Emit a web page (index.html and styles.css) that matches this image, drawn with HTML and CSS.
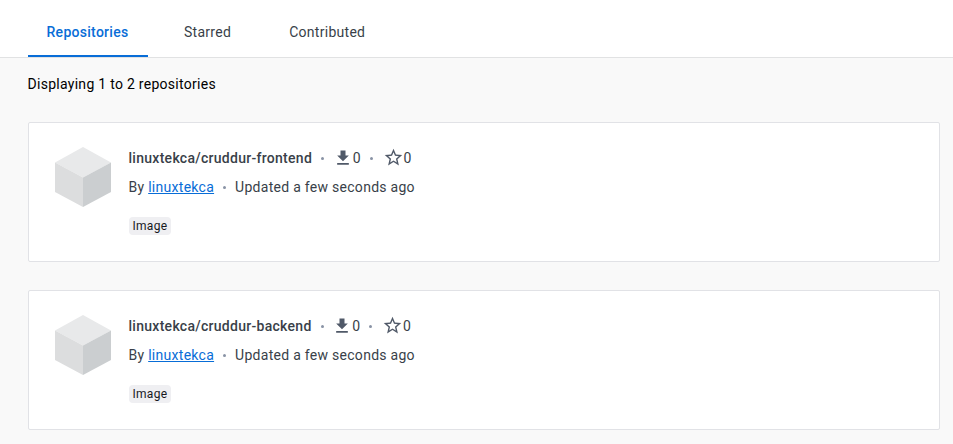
FILE: index.html
```html
<!DOCTYPE html>
<html lang="en">
<head>
<meta charset="utf-8">
<title>Repositories</title>
<link rel="stylesheet" href="styles.css">
</head>
<body>
<nav class="tabs">
  <a class="tab active">Repositories</a>
  <a class="tab">Starred</a>
  <a class="tab">Contributed</a>
</nav>
<main class="content">
  <p class="summary">Displaying 1 to 2 repositories</p>
  <article class="card">
    <svg class="cube" viewBox="0 0 56 60"><path fill="#e8e9ea" d="M28 0 56 15.500 28 30.500 0 15.500z"/><path fill="#dcddde" d="M0 15.500 28 30.500V60L0 45z"/><path fill="#cbced0" d="M56 15.500 28 30.500V60L56 45z"/></svg>
    <div class="info">
      <div class="title"><strong>linuxtekca/cruddur-frontend</strong><i class="dot"></i>
        <svg class="icon download" viewBox="0 0 24 24"><path d="M19 9h-4V3H9v6H5l7 7 7-7zM5 18v2h14v-2H5z"/></svg><span>0</span><i class="dot"></i>
        <svg class="icon star" viewBox="0 0 24 24"><path d="m22 9.240-7.190-.62L12 2 9.190 8.630 2 9.240l5.460 4.730L5.820 21 12 17.270 18.180 21l-1.630-7.030L22 9.240zM12 15.400l-3.760 2.270 1-4.280-3.320-2.880 4.380-.38L12 6.100l1.710 4.040 4.380.38-3.320 2.880 1 4.280L12 15.400z"/></svg><span>0</span></div>
      <div class="meta">By&nbsp;<a class="owner">linuxtekca</a><i class="dot"></i><span>Updated a few seconds ago</span></div>
      <span class="badge">Image</span>
    </div>
  </article>
  <article class="card">
    <svg class="cube" viewBox="0 0 56 60"><path fill="#e8e9ea" d="M28 0 56 15.500 28 30.500 0 15.500z"/><path fill="#dcddde" d="M0 15.500 28 30.500V60L0 45z"/><path fill="#cbced0" d="M56 15.500 28 30.500V60L56 45z"/></svg>
    <div class="info">
      <div class="title"><strong>linuxtekca/cruddur-backend</strong><i class="dot"></i>
        <svg class="icon download" viewBox="0 0 24 24"><path d="M19 9h-4V3H9v6H5l7 7 7-7zM5 18v2h14v-2H5z"/></svg><span>0</span><i class="dot"></i>
        <svg class="icon star" viewBox="0 0 24 24"><path d="m22 9.240-7.190-.62L12 2 9.190 8.630 2 9.240l5.460 4.730L5.820 21 12 17.270 18.180 21l-1.630-7.030L22 9.240zM12 15.400l-3.760 2.270 1-4.280-3.320-2.880 4.380-.38L12 6.100l1.710 4.040 4.380.38-3.320 2.880 1 4.280L12 15.400z"/></svg><span>0</span></div>
      <div class="meta">By&nbsp;<a class="owner">linuxtekca</a><i class="dot"></i><span>Updated a few seconds ago</span></div>
      <span class="badge">Image</span>
    </div>
  </article>
</main>
</body>
</html>
```
FILE: styles.css
```css
* { box-sizing: border-box; }
body { margin: 0; height: 444px; overflow: hidden; background: #f9f9f9; color: #000; font: 14px/20px Roboto, sans-serif; letter-spacing: .28px; }
.tabs { display: flex; gap: 14px; height: 58px; padding-left: 28px; background: #fff; border-bottom: 1px solid #e1e2e3; }
.tab { height: 57px; padding: 22px 22px 0; color: #393f49; text-align: center; }
.active { width: 120px; padding: 22px 18.500px 0 17.500px; color: #086dd7; font-weight: 500; border-bottom: 2px solid #086dd7; }
.content { padding: 16px 13px 0 28px; }
.summary { margin: 0 0 28px -.5px; }
.card { display: flex; height: 140px; margin-bottom: 28px; padding: 24px 26px; background: #fff; border: 1px solid #e1e2e6; border-radius: 2px; }
.cube { width: 56px; height: 60px; }
.info { margin-left: 17.500px; padding-top: 1px; color: #393f49; }
.title, .meta { display: flex; align-items: center; height: 20px; }
.title strong { font-weight: 500; }
.meta { margin-top: 9px; }
.dot { width: 3px; height: 3px; margin: 0 9px; border-radius: 50%; background: #8993a5; }
.icon { width: 20px; height: 20px; fill: #505968; }
.download { margin-left: -.5px; margin-right: .2px; }
.star { width: 21px; height: 21px; margin: 0 0 1px .6px; }
.badge { display: inline-block; margin-top: 20px; padding: 0 4px; border-radius: 4px; background: #efeff2; color: #17191e; font-size: 12px; line-height: 18px; }
.owner { color: #086dd7; text-decoration: underline; }
```
